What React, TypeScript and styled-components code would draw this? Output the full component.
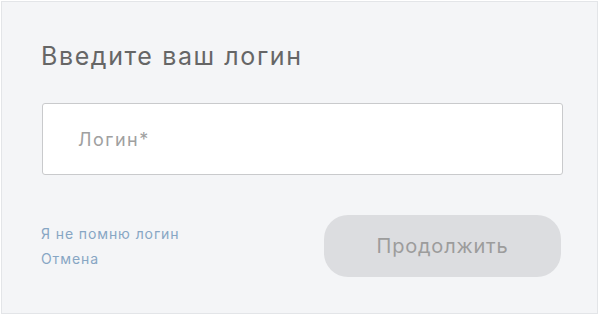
import React from 'react'
import styled, { createGlobalStyle } from 'styled-components';

const colors = {
  page: '#ffffff',
  panel: '#f4f5f7',
  frame: '#e3e5e8',
  title: '#666666',
  inputBorder: '#c9cacc',
  placeholder: '#a0a0a0',
  link: '#87a6c4',
  buttonBg: '#dcdde0',
  buttonText: '#9c9c9c'
};

const GlobalStyle = createGlobalStyle`
  html, body {
    margin: 0;
    padding: 0;
    background: ${ colors.page };
    font-family: Inter, "Liberation Sans", Arial, sans-serif;
  }
`;

const Panel = styled.div`
  box-sizing: border-box;
  width: 597px;
  height: 313px;
  margin: 1px 0 0 1px;
  border: 1px solid ${ colors.frame };
  background: ${ colors.panel };
  padding: 39px 35px 0 39px;
  display: flex;
  flex-direction: column;
`;

const Title = styled.h1`
  margin: 0;
  font-size: 25px;
  font-weight: 400;
  line-height: 30px;
  letter-spacing: 1.6px;
  color: ${ colors.title };
`;

const Field = styled.input`
  box-sizing: border-box;
  width: 521px;
  height: 72px;
  margin: 32px 0 0 1px;
  padding: 0 35px;
  border: 1px solid ${ colors.inputBorder };
  border-radius: 3px;
  background: #ffffff;
  outline: none;
  font-family: inherit;
  font-size: 18px;
  letter-spacing: 1.5px;
  color: #333;

  &::placeholder {
    color: ${ colors.placeholder };
  }
`;

const Footer = styled.div`
  display: flex;
  justify-content: space-between;
  align-items: flex-start;
  margin-top: 40px;
`;

const Links = styled.div`
  display: flex;
  flex-direction: column;
  gap: 7px;
  padding-top: 10px;
`;

const Link = styled.a`
  font-size: 14px;
  line-height: 18px;
  letter-spacing: 0.9px;
  color: ${ colors.link };
  text-decoration: none;
  cursor: pointer;
`;

const Button = styled.button`
  width: 237px;
  height: 62px;
  margin-right: 1px;
  border: none;
  border-radius: 24px;
  background: ${ colors.buttonBg };
  color: ${ colors.buttonText };
  font-family: inherit;
  font-size: 20px;
  letter-spacing: 0.8px;
  cursor: default;
`;

export default function App() {
  return <>
    <GlobalStyle />
    <Panel>
      <Title>Введите ваш логин</Title>
      <Field placeholder="Логин*" />
      <Footer>
        <Links>
          <Link>Я не помню логин</Link>
          <Link>Отмена</Link>
        </Links>
        <Button disabled>Продолжить</Button>
      </Footer>
    </Panel>
  </>
}
